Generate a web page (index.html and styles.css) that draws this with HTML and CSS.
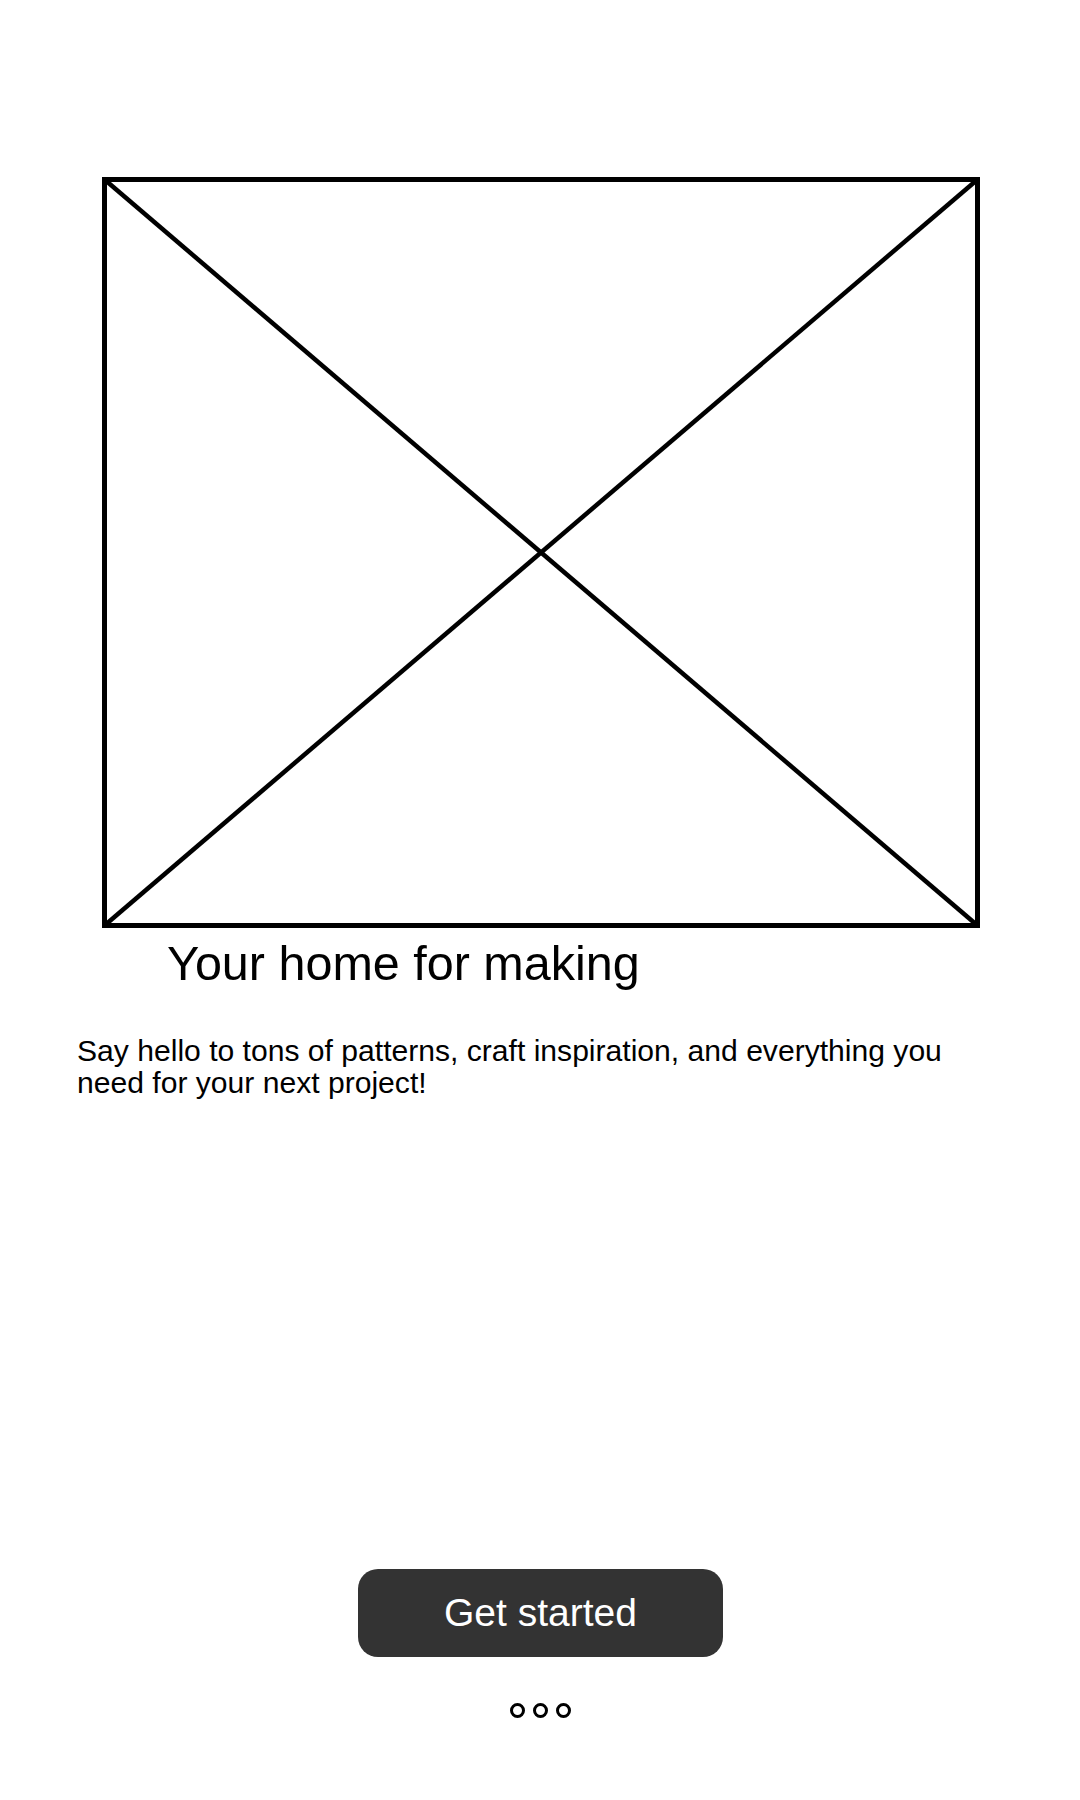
FILE: index.html
```html
<!DOCTYPE html>
<html lang="en">
<head>
<meta charset="utf-8">
<title>Your home for making</title>
<link rel="stylesheet" href="styles.css">
</head>
<body>
<main class="screen">
  <div class="placeholder">
    <svg width="880" height="753" viewBox="0 0 880 753" xmlns="http://www.w3.org/2000/svg">
      <rect x="3.5" y="3.5" width="873" height="746" fill="none" stroke="#000" stroke-width="5"/>
      <line x1="3.5" y1="3.5" x2="876.5" y2="749.5" stroke="#000" stroke-width="4.5"/>
      <line x1="876.5" y1="3.5" x2="3.5" y2="749.5" stroke="#000" stroke-width="4.5"/>
    </svg>
  </div>
  <h1 class="title">Your home for making</h1>
  <p class="intro">Say hello to tons of patterns, craft inspiration, and everything you need for your next project!</p>
  <div class="actions">
    <button class="cta" type="button">Get started</button>
    <div class="dots">
      <span class="dot"></span>
      <span class="dot"></span>
      <span class="dot"></span>
    </div>
  </div>
</main>
</body>
</html>
```

FILE: styles.css
```css
html, body {
  margin: 0;
  padding: 0;
  background: #fff;
}

.screen {
  width: 1080px;
  height: 1800px;
  box-sizing: border-box;
  padding-top: 176px;
  font-family: "Liberation Sans", Arial, sans-serif;
  color: #000;
  display: flex;
  flex-direction: column;
}

.placeholder {
  margin-left: 101px;
  width: 880px;
  height: 753px;
}

.placeholder svg {
  display: block;
}

.title {
  margin: 7px 0 0 167px;
  font-size: 48.5px;
  font-weight: normal;
  line-height: 55px;
}

.intro {
  margin: 44px 0 0 77px;
  width: 900px;
  font-size: 30.1px;
  line-height: 32px;
}

.actions {
  margin-top: auto;
  margin-bottom: 82px;
  display: flex;
  flex-direction: column;
  align-items: center;
}

.cta {
  width: 365px;
  height: 88px;
  border: none;
  border-radius: 20px;
  background: #333333;
  color: #fff;
  font-family: "Liberation Sans", Arial, sans-serif;
  font-size: 39px;
  padding: 0;
  margin-left: 1px;
}

.dots {
  margin-top: 46px;
  display: flex;
  gap: 8px;
}

.dot {
  width: 15px;
  height: 15px;
  box-sizing: border-box;
  border: 3px solid #000;
  border-radius: 50%;
}
```
